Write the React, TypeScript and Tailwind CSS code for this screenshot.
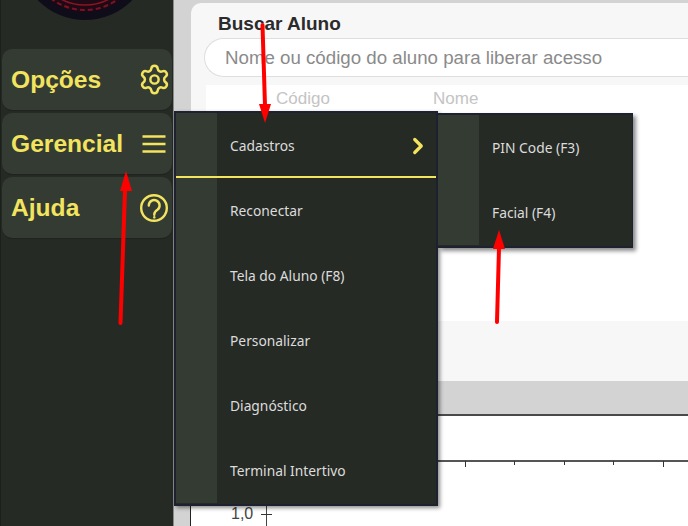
import { Settings, ChevronRight } from "lucide-react";

function SideButton({ label, icon }: { label: string; icon: React.ReactNode }) {
  return (
    <div className="h-[61px] rounded-[10px] bg-[#343b33] flex items-center justify-between pl-[9px] pr-[1px] shadow-[0_1px_1px_rgba(0,0,0,0.2)]">
      <span className="-mt-[1px] font-['Liberation_Sans',sans-serif] font-bold text-[24.6px] leading-[25px] text-[#f2e45f]">{label}</span>
      <span className="w-[34px] h-[34px] flex items-center justify-center text-[#f2e45f]">{icon}</span>
    </div>
  );
}

function Item({ label, arrow }: { label: string; arrow?: boolean }) {
  return (
    <div className="h-[65px] flex items-center justify-between pl-[13px] pr-[5px]">
      <span className="mt-[2px] text-[13.8px] text-[#dcdcdc] font-['Noto_Sans',sans-serif]">{label}</span>
      {arrow && <ChevronRight size={26} strokeWidth={3} className="text-[#f2e45f]" />}
    </div>
  );
}

function SubItem({ label }: { label: string }) {
  return (
    <div className="h-[65px] flex items-center pl-[13px] text-[13.8px] text-[#dcdcdc] font-['Noto_Sans',sans-serif]">
      <span className="mt-[2px]">{label}</span>
    </div>
  );
}

export default function App() {
  return (
    <div className="relative w-[688px] h-[526px] overflow-hidden flex bg-[#d3d3d3] font-['Liberation_Sans',sans-serif]">
      {/* Sidebar */}
      <aside className="w-[174px] shrink-0 bg-[#262a25] border-l border-l-[#1c1f1b] border-r border-r-[#8a8a8a] px-[1px] flex flex-col">
        <div className="h-[49px] shrink-0 relative overflow-hidden">
          <svg width="172" height="49" viewBox="0 0 172 49" className="absolute left-0 top-0">
            <circle cx="83" cy="-46" r="66" fill="#0f0d1a" />
            <circle cx="83" cy="-46" r="58" fill="#1d0a14" />
            <circle cx="83" cy="-46" r="56" fill="none" stroke="#7c1224" strokeWidth="2" strokeDasharray="5 3" />
            <circle cx="83" cy="-46" r="51" fill="none" stroke="#8a1424" strokeWidth="1.5" />
          </svg>
        </div>
        <div className="flex flex-col gap-[3px]">
          <SideButton label="Opções" icon={<Settings size={33} strokeWidth={1.8} />} />
          <SideButton
            label="Gerencial"
            icon={
              <svg width="34" height="34" viewBox="0 0 34 34" stroke="currentColor" strokeWidth="2.5" fill="none">
                <path d="M5.5 9.5h23M5.5 17h23M5.5 24.5h23" />
              </svg>
            }
          />
          <SideButton
            label="Ajuda"
            icon={
              <svg width="34" height="34" viewBox="0 0 34 34" stroke="currentColor" strokeWidth="2.4" fill="none" strokeLinecap="round">
                <circle cx="17" cy="17" r="12.8" />
                <path d="M11.8 14.5a5.4 5.4 0 1 1 8.6 4.3c-2 1.4-3.1 2.2-3.1 4.5v0.5" />
                <path d="M17.3 26.3v0.1" />
              </svg>
            }
          />
        </div>
      </aside>

      {/* Main */}
      <main className="flex-1 min-w-0 flex flex-col">
        <div className="h-[381px] shrink-0 pl-[17px] pt-[3px]">
          <section className="h-[378px] rounded-tl-[10px] bg-[#f7f7f7] flex flex-col">
            <h2 className="pl-[27px] h-[35px] pt-[11px] text-[19px] leading-[20px] font-bold text-[#2b2b2b]">Buscar Aluno</h2>
            <div className="ml-[13px] h-[39px] rounded-l-[20px] bg-white border-y border-l border-[#dedede] pl-[20px] pt-[2px] flex items-center text-[18.7px] text-[#8a8a8a]">
              Nome ou código do aluno para liberar acesso
            </div>
            <div className="ml-[15px] mt-[8px] h-[236px] bg-white">
              <div className="h-[27px] flex items-center text-[17px] text-[#c4c4c4]">
                <span className="ml-[70px] w-[157px]">Código</span>
                <span>Nome</span>
              </div>
            </div>
          </section>
        </div>
        <div className="h-[33px] shrink-0 bg-[#d3d3d3] border-b-2 border-b-[#4a4a4a] box-content" />
        <div className="flex-1 flex pl-[16px]">
          <div className="flex-1 bg-white border-l border-l-[#222] relative">
            <div className="absolute left-0 right-0 top-[44px] h-[2px] bg-[#555]" />
            <div className="absolute left-[75px] top-[44px] bottom-0 w-[1px] bg-[#444]" />
            <div className="absolute left-[70px] top-[98px] w-[11px] h-[1px] bg-[#333]" />
            <span className="absolute left-[40px] top-[88px] text-[16px] leading-[20px] text-[#444]">1,0</span>
            <div className="absolute left-[274px] top-[45px] w-[1px] h-[6px] bg-[#333]" />
            <div className="absolute left-[323px] top-[45px] w-[1px] h-[4px] bg-[#333]" />
            <div className="absolute left-[373px] top-[45px] w-[1px] h-[4px] bg-[#333]" />
            <div className="absolute left-[422px] top-[45px] w-[1px] h-[4px] bg-[#333]" />
            <div className="absolute left-[472px] top-[45px] w-[1px] h-[6px] bg-[#333]" />
          </div>
        </div>
      </main>

      {/* Menu */}
      <div className="absolute left-[174px] top-[111px] w-[264px] h-[395px] bg-[#262a25] border-2 border-[#1e2130] flex shadow-[2px_2px_4px_rgba(0,0,0,0.45)]">
        <div className="w-[41px] mb-[1px] bg-[#343b33] shrink-0" />
        <div className="flex-1 flex flex-col">
          <Item label="Cadastros" arrow />
          <Item label="Reconectar" />
          <Item label="Tela do Aluno (F8)" />
          <Item label="Personalizar" />
          <Item label="Diagnóstico" />
          <Item label="Terminal Intertivo" />
        </div>
        <div className="absolute left-0 right-0 top-[63px] h-[2px] bg-[#f2e45f]" />
      </div>

      {/* Submenu */}
      <div className="absolute left-[438px] top-[113px] w-[195px] h-[135px] bg-[#262a25] border-y-2 border-r border-[#1e2130] flex shadow-[3px_3px_4px_rgba(0,0,0,0.45)]">
        <div className="w-[41px] mb-[1px] bg-[#343b33] shrink-0" />
        <div className="flex-1 flex flex-col">
          <SubItem label="PIN Code (F3)" />
          <SubItem label="Facial (F4)" />
        </div>
      </div>

      {/* Annotation arrows */}
      <svg className="absolute left-0 top-0 pointer-events-none" width="688" height="526" viewBox="0 0 688 526">
        <g stroke="#ff0000" strokeWidth="4" strokeLinecap="round" fill="#ff0000">
          <line x1="262.5" y1="25" x2="265" y2="106" />
          <polygon points="259,104 271,104 265,123" stroke="none" />
          <line x1="120.5" y1="323" x2="125" y2="190" />
          <polygon points="120,191 132,191 126,171" stroke="none" />
          <line x1="497" y1="322" x2="499" y2="248" />
          <polygon points="493,249 505,249 499,230" stroke="none" />
        </g>
      </svg>
    </div>
  );
}
